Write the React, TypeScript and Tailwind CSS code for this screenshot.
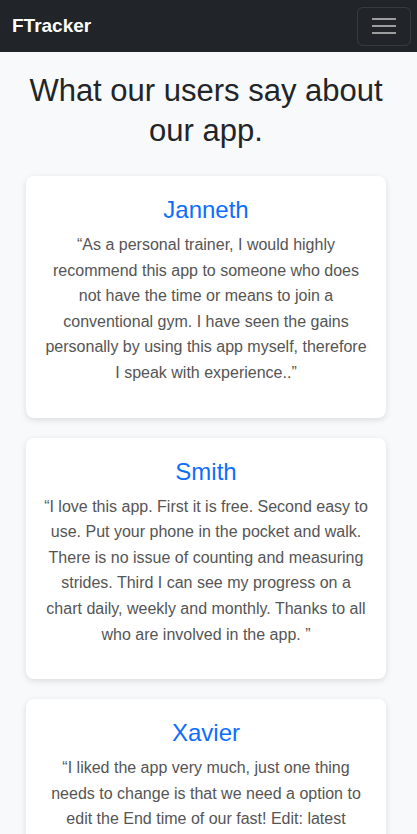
import React from 'react';

const reviews = [
  {
    name: 'Janneth',
    text: '“As a personal trainer, I would highly recommend this app to someone who does not have the time or means to join a conventional gym. I have seen the gains personally by using this app myself, therefore I speak with experience..”',
  },
  {
    name: 'Smith',
    text: '“I love this app. First it is free. Second easy to use. Put your phone in the pocket and walk. There is no issue of counting and measuring strides. Third I can see my progress on a chart daily, weekly and monthly. Thanks to all who are involved in the app. ”',
  },
  {
    name: 'Xavier',
    text: '“I liked the app very much, just one thing needs to change is that we need a option to edit the End time of our fast! Edit: latest update fixed it, thank you so much for listening to your users.”',
  },
];

export default function App() {
  return (
    <div className="min-h-screen bg-[#f8f9fa] font-['Liberation_Sans',Arial,sans-serif]">
      {/* Navbar */}
      <nav className="h-[52px] bg-[#212529] flex items-center justify-between pl-3 pr-[6px]">
        <span className="text-white text-[19px] font-bold">FTracker</span>
        <button className="w-[54px] h-[39px] border border-white/10 rounded-[6px] flex flex-col items-center justify-center gap-[5px]">
          <span className="block w-[24px] h-[2px] bg-white/55" />
          <span className="block w-[24px] h-[2px] bg-white/55" />
          <span className="block w-[24px] h-[2px] bg-white/55" />
        </button>
      </nav>

      {/* Testimonials */}
      <section className="pl-[26px] pr-[31px] pt-[19px]">
        <h2 className="text-center text-[#212529] text-[31px] leading-[40px] mb-[25px]">
          What our users say about our app.
        </h2>
        <div className="flex flex-col gap-[20px]">
          {reviews.map((r) => (
            <div
              key={r.name}
              className="bg-white rounded-[8px] shadow-[0_2px_6px_rgba(0,0,0,0.12)] px-[18px] pt-[19px] pb-[32px] text-center"
            >
              <h3 className="text-[#0d6efd] text-[24px] leading-[29px] mb-[8px]">{r.name}</h3>
              <p className="text-[#555] text-[16px] leading-[25.6px]">{r.text}</p>
            </div>
          ))}
        </div>
      </section>
    </div>
  );
}
